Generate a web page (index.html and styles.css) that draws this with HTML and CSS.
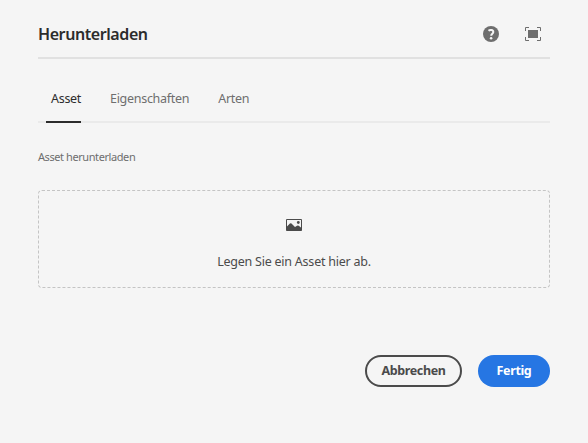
FILE: index.html
```html
<!DOCTYPE html>
<html lang="de">
<head>
<meta charset="utf-8">
<title>Herunterladen</title>
<link rel="stylesheet" href="styles.css">
</head>
<body>
<main class="dialog">
  <header class="header">
    <h1 class="title">Herunterladen</h1>
    <div class="actions">
      <svg class="icon" width="18" height="18" viewBox="0 0 18 18"><circle cx="9" cy="9" r="8" fill="#6e6e6e"/><path d="M6.500 5.700C7.800 4.500 11.300 4.500 11.300 7C11.300 8.700 9.200 8.700 9.200 10.700" fill="none" stroke="#f5f5f5" stroke-width="2"/><circle cx="9.100" cy="13.200" r="1.300" fill="#f5f5f5"/></svg>
      <svg class="icon" width="18" height="18" viewBox="0 0 18 18"><path d="M4 5h10v8H4z" fill="#6e6e6e"/><path d="M1.500 6V2.500H5M13 2.500h3.500V6M16.500 12v3.500H13M5 15.500H1.500V12" fill="none" stroke="#6e6e6e"/></svg>
    </div>
  </header>
  <nav class="tabs">
    <a class="tab selected">Asset</a>
    <a class="tab">Eigenschaften</a>
    <a class="tab">Arten</a>
  </nav>
  <label class="label">Asset herunterladen</label>
  <section class="drop">
    <svg class="image" width="18" height="18" viewBox="0 0 18 18"><path d="M1.500 3.500h15v11h-15z" fill="none" stroke="#4b4b4b"/><path d="M1.500 11l3.400-3.400q.8-.7 1.600 0L10 11l2-1.200q.9-.5 1.700 0l2.800 2.200v2.500h-15z" fill="#4b4b4b"/><circle cx="13.300" cy="6.500" r="1.400" fill="#4b4b4b"/></svg>
    <p class="hint">Legen Sie ein Asset hier ab.</p>
  </section>
  <footer class="footer">
    <button class="button cancel">Abbrechen</button>
    <button class="button done">Fertig</button>
  </footer>
</main>
</body>
</html>
```
FILE: styles.css
```css
* { box-sizing: border-box; }
body { margin: 0; background: #f5f5f5; color: #4b4b4b; font-family: "Noto Sans", "Open Sans", sans-serif; font-size: 12.5px; letter-spacing: -.23px; }
.dialog { width: 512px; margin-left: 38px; }
.header { height: 59px; padding-top: 10px; display: flex; align-items: center; justify-content: space-between; border-bottom: 2px solid #e1e1e1; }
.title { margin: 0; font-size: 16px; font-weight: 600; color: #2c2c2c; letter-spacing: -.42px; }
.actions { display: flex; gap: 24px; padding-right: 8px; }
.icon, .image { display: block; }
.tabs { height: 64px; display: flex; gap: 29px; padding-left: 8px; border-bottom: 2px solid #eaeaea; }
.tab { height: 64px; line-height: 80px; color: #6e6e6e; letter-spacing: -.29px; }
.selected { width: 35px; padding-left: 5px; color: #2c2c2c; border-bottom: 2px solid #2c2c2c; }
.label { display: block; margin-top: 25px; line-height: 18px; font-size: 11px; color: #6e6e6e; letter-spacing: -.42px; }
.drop { height: 98px; margin-top: 24px; border: 1px dashed #c4c4c4; border-radius: 4px; display: flex; flex-direction: column; align-items: center; padding-top: 25px; }
.hint { margin: 18px 0 0; line-height: 20px; }
.footer { display: flex; justify-content: flex-end; gap: 16px; margin-top: 67px; }
.button { height: 32px; padding: 0 0 2px; border-radius: 16px; font: 700 12.5px "Noto Sans", sans-serif; letter-spacing: -.37px; }
.cancel { width: 97px; border: 2px solid #4b4b4b; background: transparent; color: #4b4b4b; }
.done { width: 72px; border: 0; background: #2676e3; color: #fff; }
```
